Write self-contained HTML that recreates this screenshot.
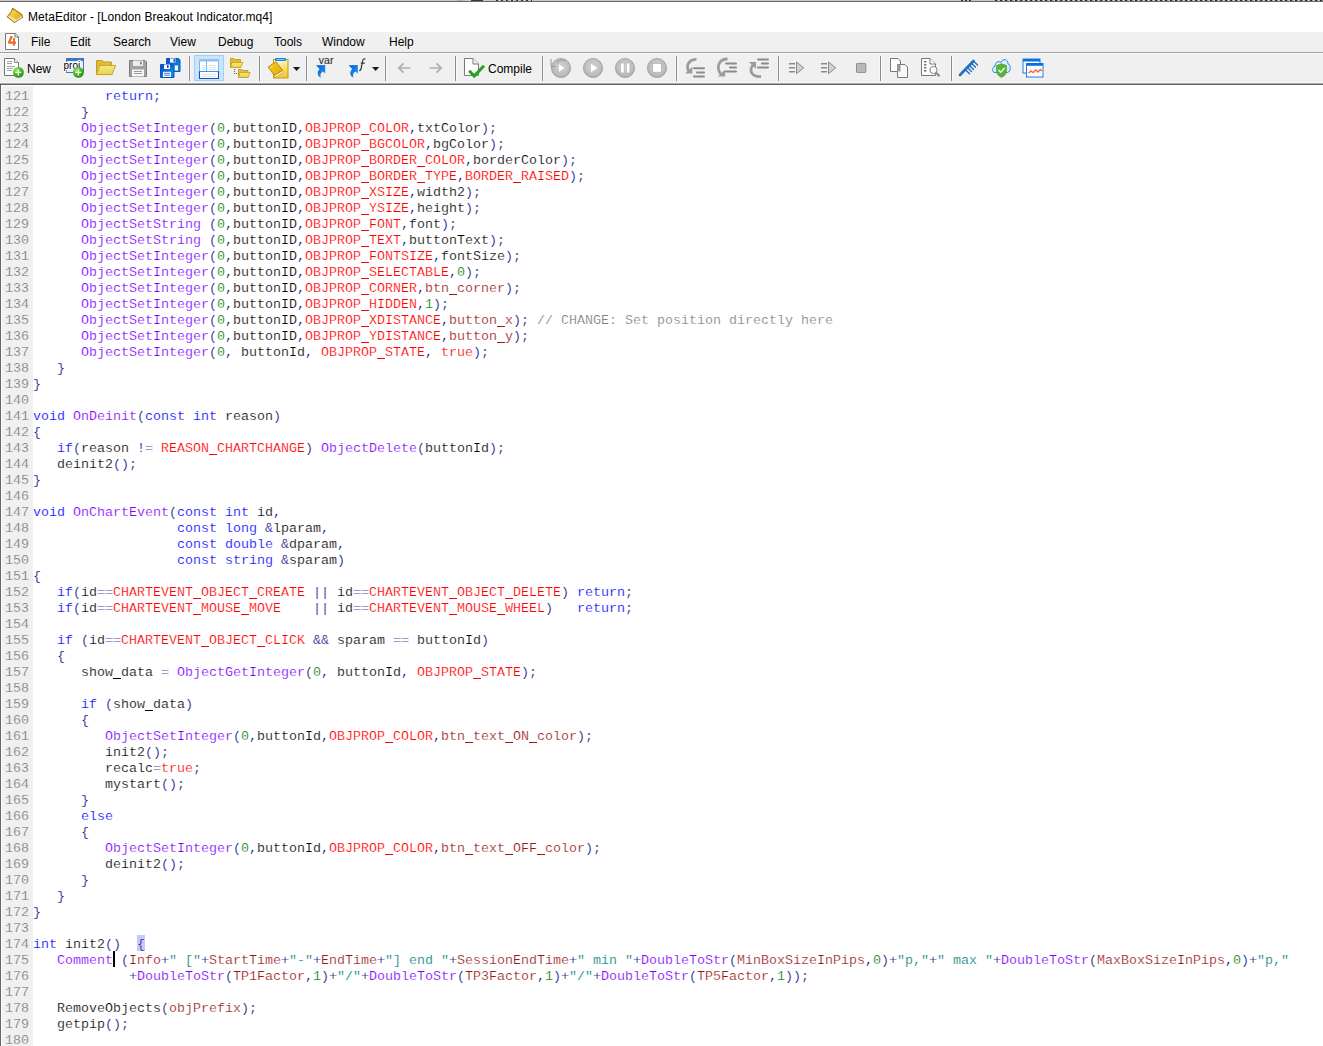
<!DOCTYPE html>
<html><head><meta charset="utf-8">
<style>
*{margin:0;padding:0;box-sizing:border-box}
html,body{width:1323px;height:1046px;overflow:hidden;background:#fff}
body{position:relative;font-family:"Liberation Sans",sans-serif}
#top{position:absolute;left:0;top:0;width:1323px;height:2px;background:#c8c8c8;border-bottom:1px solid #6a6a6a}
#title{position:absolute;left:0;top:2px;width:1323px;height:30px;background:#fff}
#title .t{position:absolute;left:28px;top:8px;font-size:12px;letter-spacing:0.05px;color:#000;white-space:nowrap}
#menu{position:absolute;left:0;top:32px;width:1323px;height:20px;background:#f0f0f0}
#menu span{position:absolute;top:3px;font-size:12px;color:#000}
#mline{position:absolute;left:0;top:52px;width:1323px;height:1px;background:#a0a0a0}
#mline2{position:absolute;left:0;top:53px;width:1323px;height:1px;background:#fafafa}
#tb{position:absolute;left:0;top:54px;width:1323px;height:28px;background:#f0f0f0}
#tbl1{position:absolute;left:0;top:82px;width:1323px;height:1px;background:#f8f8f8}
#tbl2{position:absolute;left:0;top:83px;width:1323px;height:1px;background:#a8a8a8}
#tbl3{position:absolute;left:0;top:84px;width:1323px;height:1px;background:#646464}
.sep{position:absolute;top:2px;width:1px;height:25px;background:#8c8c8c;box-shadow:1px 0 0 #fafafa,-1px 0 0 #f6f6f6}
.ico{position:absolute}
#tb .lbl{position:absolute;font-size:12px;color:#000;top:8px}
#ed{position:absolute;left:0;top:85px;width:1323px;height:961px;background:#fff}
#edl{position:absolute;left:0;top:85px;width:1px;height:961px;background:#646464}
#gut{position:absolute;left:2px;top:86px;width:31px;height:960px;background:#f0f0f0}
#code{position:absolute;left:0;top:89px;width:1323px}
.ln{height:16px;position:relative;white-space:pre;font-family:"Liberation Mono",monospace;font-size:13.333px;line-height:16px;-webkit-text-stroke:0.2px #fff}
.no{position:absolute;left:5px;top:0;color:#808080;-webkit-text-stroke:0.15px #f0f0f0}
.tx{position:absolute;left:33px;top:0;color:#000}
i{font-style:normal}
.u{display:inline-block;width:8px;height:16px;vertical-align:top;background:linear-gradient(currentColor,currentColor) 0 13px/8px 1px no-repeat}
.k{color:#0000ff}.f{color:#8000ff}.r{color:#ff0000}.v{color:#981818}.n{color:#008000}.p{color:#000080}.s{color:#008080}.c{color:#808080}
.hlb{background:#c8c8ff}
.caret{display:inline-block;position:absolute;width:2px;height:16px;background:#000;margin-left:0}
</style></head><body>
<div id="top"></div>
<div style="position:absolute;left:457px;top:0;width:14px;height:1px;background:linear-gradient(90deg,#a8a8a8,#d8d8d8)"></div>
<div style="position:absolute;left:471px;top:0;width:12px;height:1px;background:#3a3a3a"></div>
<div style="position:absolute;left:496px;top:0;width:36px;height:1px;background:repeating-linear-gradient(90deg,#333 0 2px,#c8c8c8 2px 5px)"></div>
<div style="position:absolute;left:961px;top:0;width:12px;height:1px;background:repeating-linear-gradient(90deg,#333 0 2px,#c8c8c8 2px 4px)"></div>
<div style="position:absolute;left:995px;top:0;width:328px;height:1px;background:repeating-linear-gradient(90deg,#2a2a2a 0 2px,#a0a0a0 2px 3px,#c8c8c8 3px 5px)"></div>

<div id="title"><div class="t">MetaEditor - [London Breakout Indicator.mq4]</div></div>
<div id="menu">
<span style="left:31px">File</span><span style="left:70px">Edit</span><span style="left:113px">Search</span><span style="left:170px">View</span><span style="left:218px">Debug</span><span style="left:274px">Tools</span><span style="left:322px">Window</span><span style="left:389px">Help</span>
</div>
<div id="mline"></div><div id="mline2"></div>
<div id="tb">
<span class="lbl" style="left:27px">New</span>
<span class="lbl" style="left:488px">Compile</span>
<div class="sep" style="left:189px"></div>
<div class="sep" style="left:259px"></div>
<div class="sep" style="left:306px"></div>
<div class="sep" style="left:385px"></div>
<div class="sep" style="left:455px"></div>
<div class="sep" style="left:542px"></div>
<div class="sep" style="left:676px"></div>
<div class="sep" style="left:778px"></div>
<div class="sep" style="left:880px"></div>
<div class="sep" style="left:951px"></div>
</div>
<div id="tbl1"></div><div id="tbl2"></div><div id="tbl3"></div>
<svg id="icons" width="1323" height="85" viewBox="0 0 1323 85" style="position:absolute;left:0;top:0">
<defs>
<linearGradient id="gold" x1="0" y1="0" x2="1" y2="1"><stop offset="0" stop-color="#fff2a0"/><stop offset="0.5" stop-color="#e9c02a"/><stop offset="1" stop-color="#d9a21c"/></linearGradient>
<radialGradient id="grn" cx="0.35" cy="0.3" r="0.75"><stop offset="0" stop-color="#9be85a"/><stop offset="0.6" stop-color="#3cb424"/><stop offset="1" stop-color="#2a8a14"/></radialGradient>
<linearGradient id="fold" x1="0" y1="0" x2="0" y2="1"><stop offset="0" stop-color="#f7ea80"/><stop offset="1" stop-color="#e8d050"/></linearGradient>
<linearGradient id="blu" x1="0" y1="0" x2="1" y2="1"><stop offset="0" stop-color="#0b4cc0"/><stop offset="1" stop-color="#0a9af0"/></linearGradient>
<radialGradient id="gc" cx="0.5" cy="0.45" r="0.55"><stop offset="0" stop-color="#d6d6d6"/><stop offset="0.75" stop-color="#bdbdbd"/><stop offset="1" stop-color="#a6a6a6"/></radialGradient>
<linearGradient id="arr" x1="0" y1="0" x2="1" y2="1"><stop offset="0" stop-color="#0a5ad0"/><stop offset="1" stop-color="#1aa0f8"/></linearGradient>
</defs>
<!-- title app icon -->
<path d="M12.6,8.3 L21.7,14.5 L22.7,17 L14.6,22.5 L7.3,16.9 L11.4,11.9 Z" fill="url(#gold)" stroke="#b07a1c" stroke-width="1.1" stroke-linejoin="round"/>
<path d="M7.9,16.5 L9,15.5 L16.6,19.4 L16.2,21.3 L14.6,22 Z" fill="#f3dfa0"/>
<path d="M16.6,19.4 L21.9,15.7 L22.3,16.9 L16.2,21.3 Z" fill="#ece2b8"/>
<!-- menu doc icon -->
<path d="M5.5,33.5 H15.5 L18.5,36.5 V49.5 H5.5 Z" fill="#fff" stroke="#7a7a7a" stroke-width="1"/>
<path d="M15,33.5 V37 H18.5" fill="#fff" stroke="#6a6a6a" stroke-width="1"/>
<path d="M10.4,36 H13 L10.6,41.5 H13 V38 H15 V41.5 H16 V43.8 H15 V45.8 H13 V43.8 H8.1 V41.8 Z" fill="#e8702c"/>
<!-- New doc -->
<path d="M4.5,58.5 H14.5 L18.5,62.5 V75.5 H4.5 Z" fill="#fff" stroke="#6e737a" stroke-width="1"/>
<path d="M14.5,58.5 V62.5 H18.5" fill="#fafafa" stroke="#80868c" stroke-width="1"/>
<g stroke="#a0a5aa" stroke-width="1"><path d="M7,61.5H12M7,63.5H12M7,66.5H15M7,68.5H13M7,70.5H12"/></g>
<circle cx="18.4" cy="72.4" r="5.4" fill="url(#grn)"/>
<path d="M15.4,72.4H21.4M18.4,69.4V75.4" stroke="#fff" stroke-width="1.3"/>
<!-- proj -->
<rect x="66.5" y="58.5" width="17" height="14" fill="#e4eef7" stroke="#3b78c6" stroke-width="1"/>
<rect x="66" y="58" width="18" height="3" fill="#3b78c6"/>
<text x="63.5" y="68.6" font-family="Liberation Sans" font-size="10" fill="#000" stroke="#fff" stroke-width="2" paint-order="stroke">proj</text>
<circle cx="78.4" cy="72.4" r="5.4" fill="url(#grn)"/>
<path d="M75.4,72.4H81.4M78.4,69.4V75.4" stroke="#fff" stroke-width="1.3"/>
<!-- open folder -->
<path d="M96.5,60.5 H102.5 L103.5,62 H111.5 V74.5 H96.5 Z" fill="#dcbc38" stroke="#c49c18" stroke-width="1"/>
<path d="M99.7,65.4 H115.6 L112,74.6 H96.4 Z" fill="url(#fold)" stroke="#c8a428" stroke-width="1" stroke-linejoin="round"/>
<!-- save gray -->
<path d="M129.5,60.5 H145 L146.5,62 V76.5 H129.5 Z" fill="#a2a2a2" stroke="#7c7c7c" stroke-width="1"/>
<rect x="133" y="60.5" width="10" height="5.5" fill="#ececec"/>
<rect x="140" y="61.8" width="1.6" height="2.6" fill="#7a7a7a"/>
<rect x="132" y="69.5" width="12" height="7" fill="#f8f8f8"/>
<path d="M134,71.5H142M134,73.5H142" stroke="#9a9a9a" stroke-width="1"/>
<!-- save all blue -->
<g>
<path d="M166.5,58.5 H178.5 L180,60 V71.5 H166.5 Z" fill="url(#blu)" stroke="#0c55c0" stroke-width="1"/>
<rect x="170" y="58.5" width="5.5" height="4" fill="#fff"/>
<rect x="173.5" y="59.3" width="1.6" height="2.4" fill="#0a30c0"/>
<rect x="174.5" y="65.5" width="3.5" height="5" fill="#fff"/>
</g>
<g>
<path d="M160.5,64.5 H172.5 L174,66 V77.5 H160.5 Z" fill="url(#blu)" stroke="#0c55c0" stroke-width="1"/>
<rect x="164" y="64.5" width="6" height="4.5" fill="#fff"/>
<rect x="167" y="65.2" width="1.6" height="2.6" fill="#0a30c0"/>
<rect x="163" y="71.8" width="8" height="5.2" fill="#fff"/>
<path d="M164,73.3H170M164,75.2H170" stroke="#2070e0" stroke-width="0.9"/>
</g>
<!-- pressed button -->
<rect x="194.5" y="55.5" width="29" height="25" fill="#cce4f7" stroke="#99d1ff" stroke-width="1"/>
<rect x="199.5" y="59.5" width="19" height="19" fill="#fff" stroke="#7fb5ea" stroke-width="1"/>
<rect x="199" y="59" width="20" height="2.5" fill="#8ec2f0"/>
<path d="M206.5,61V71" stroke="#6ab8f0" stroke-width="1"/>
<g stroke="#d4d8dc" stroke-width="0.8"><path d="M202,65.5H205M202,67.5H205M202,69.5H205M209,65.5H216M209,67.5H216M209,69.5H216M202,74.5H216M202,76.5H216"/></g>
<path d="M199.5,71.5H218.5V78.5H199.5Z" fill="none" stroke="#0f50c0" stroke-width="1.1"/>
<path d="M199.5,71.5H218.5" stroke="#1ea0f0" stroke-width="1"/>
<!-- folders tree -->
<path d="M230.5,58.5 H234 L235,59.5 H240.5 V67.5 H230.5 Z" fill="#dcbc38" stroke="#c49c18" stroke-width="0.9"/>
<path d="M232,62.5 H243 L240.5,67.5 H230.5 Z" fill="url(#fold)" stroke="#c8a428" stroke-width="0.9"/>
<g fill="#444"><circle cx="234.5" cy="69.5" r="0.6"/><circle cx="234.5" cy="71.5" r="0.6"/><circle cx="234.5" cy="73.5" r="0.6"/><circle cx="236.5" cy="73.5" r="0.6"/></g>
<path d="M238.5,69.5 H242 L243,70.5 H248 V77.5 H238.5 Z" fill="#dcbc38" stroke="#c49c18" stroke-width="0.9"/>
<path d="M240,72.5 H250 L248,77.5 H238.5 Z" fill="url(#fold)" stroke="#c8a428" stroke-width="0.9"/>
<!-- book/clipboard -->
<linearGradient id="clip" x1="0.2" y1="0" x2="0.6" y2="1"><stop offset="0" stop-color="#fffbe0"/><stop offset="0.6" stop-color="#f8e070"/><stop offset="1" stop-color="#f0cc30"/></linearGradient>
<linearGradient id="bk" x1="0" y1="0" x2="1" y2="1"><stop offset="0" stop-color="#f8d020"/><stop offset="1" stop-color="#e0a808"/></linearGradient>
<rect x="273.5" y="59.5" width="14.5" height="18.5" fill="url(#clip)" stroke="#c49a10" stroke-width="1"/>
<rect x="275" y="58" width="11" height="3" rx="0.8" fill="#1a88ea"/>
<path d="M276.5,59.5H284.5" stroke="#8ad0ff" stroke-width="0.8"/>
<path d="M268.2,67 L276,61.7 L282.5,70.2 L274.4,75.6 Z" fill="url(#bk)" stroke="#c08a08" stroke-width="1" stroke-linejoin="round"/>
<path d="M270,67.8 L272.4,66.2" stroke="#fff2a0" stroke-width="0.6"/>
<path d="M274.6,75.8 L282.6,70.5 L283.2,72.2 L275.4,77.6 Z" fill="#fff" stroke="#c08a08" stroke-width="0.7"/>
<!-- dropdown arrows -->
<path d="M293,67H300.2L296.6,71Z" fill="#1a1a1a"/>
<path d="M372,67H379.2L375.6,71Z" fill="#1a1a1a"/>
<!-- var -->
<text x="318.8" y="63.8" font-family="Liberation Sans" font-size="10.5" fill="#333" stroke="#333" stroke-width="0.15">var</text>
<path d="M316,65.3 L325.2,65 L325.2,73.6 L322.8,71.4 C320.5,73 320,75 320.8,77.8 C317.5,76 316.5,72.5 319.6,69 Z" fill="url(#arr)"/>
<!-- f -->
<path d="M348.6,65.3 L357.8,65 L357.8,73.6 L355.4,71.4 C353.1,73 352.6,75 353.4,77.8 C350.1,76 349.1,72.5 352.2,69 Z" fill="url(#arr)"/>
<path d="M365.5,59 C363.6,58.4 362.8,59.6 362.4,62 L361,69 C360.7,70.3 360,70.6 359.2,70.2 M360.8,63.2H364.8" fill="none" stroke="#383838" stroke-width="1.25"/>
<!-- back/forward -->
<g fill="none" stroke="#acacac" stroke-width="1.7" stroke-linecap="round" stroke-linejoin="round">
<path d="M398.8,68H409.6M403,63.8L398.8,68L403,72.2"/>
<path d="M430.4,68H441.2M437,63.8L441.2,68L437,72.2"/>
</g>
<!-- compile doc -->
<path d="M464.5,58.5 H473 L478.5,64 V75.5 H464.5 Z" fill="#fff" stroke="#7a7a7a" stroke-width="1"/>
<path d="M473,58.5V64H478.5" fill="#f4f4f4" stroke="#7a7a7a" stroke-width="1"/>
<path d="M469.2,70.8 L474.2,76 L484,65.8" fill="none" stroke="#26a01c" stroke-width="3" stroke-linejoin="miter"/>
<!-- circles -->
<g stroke="#a0a0a0" stroke-width="0.8" fill="url(#gc)">
<circle cx="561" cy="68" r="9.6"/><circle cx="593" cy="68" r="9.6"/><circle cx="625" cy="68" r="9.6"/><circle cx="657" cy="68" r="9.6"/>
</g>
<path d="M551,59 V66.5 H556 M556.5,63 C558.5,60 562,59.3 566,61" fill="none" stroke="#9a9a9a" stroke-width="1"/>
<path d="M558.5,63.5 L565,68 L558.5,72.5 Z" fill="#fff" stroke="#b0b0b0" stroke-width="0.5"/>
<path d="M590.5,63 L598,68 L590.5,73 Z" fill="#fff" stroke="#b0b0b0" stroke-width="0.5"/>
<rect x="620.5" y="63" width="3.6" height="10" fill="#fff" stroke="#a0a0a0" stroke-width="0.5"/>
<rect x="626.3" y="63" width="3.6" height="10" fill="#fff" stroke="#a0a0a0" stroke-width="0.5"/>
<rect x="652.8" y="63.5" width="8.4" height="8.6" fill="#fff" stroke="#a0a0a0" stroke-width="0.5"/>
<!-- step icons -->
<g fill="none" stroke="#9c9c9c" stroke-width="2.8">
<path d="M696.5,59.5 C690,59 685.5,64.5 688.5,71"/>
<path d="M727.5,59 C719,59 715.5,67 721,74.5"/>
<path d="M753,65 C748.5,71 752,77 761,76.5"/>
</g>
<g fill="#9c9c9c">
<path d="M685,73.6 H692.3 V66.8 Z"/>
<path d="M718,76.5 H725.2 V69.6 Z"/>
<path d="M748.8,62 H756 V69 Z"/>
</g>
<g stroke="#8a8a8a" stroke-width="2" stroke-linecap="round" fill="none">
<path d="M694,68.3H704M697,72.5H704M694,76.5H704"/>
<path d="M726,63.5H736M730,67.5H736M726,71.5H736"/>
<path d="M758,59.5H768M762,63.5H768M758,67.5H768"/>
</g>
<!-- run icons -->
<g stroke="#8a8a8a" stroke-width="1.5" stroke-linecap="round"><path d="M789.5,63.8H794.5M789.5,67.8H794.5M789.5,71.8H794.5M821.5,63.8H826.5M821.5,67.8H826.5M821.5,71.8H826.5"/></g>
<path d="M796.5,62 L803.8,67.8 L796.5,73.7 Z" fill="#d0d0d0" stroke="#8e8e8e" stroke-width="1"/>
<path d="M828.5,62 L835.8,67.8 L828.5,73.7 Z" fill="#d0d0d0" stroke="#8e8e8e" stroke-width="1"/>
<rect x="856.5" y="63.4" width="9.3" height="9" fill="#b8b8b8" stroke="#8c8c8c" stroke-width="1" rx="0.6"/>
<!-- copy docs -->
<path d="M890.5,58.5 H898 L900.5,61 V71.5 H890.5 Z" fill="#fff" stroke="#777" stroke-width="1"/>
<path d="M897.5,64.5 H905 L907.5,67 V77.5 H897.5 Z" fill="#fafafa" stroke="#777" stroke-width="1"/>
<rect x="897" y="64.5" width="3.5" height="7" fill="#9a9a9a"/>
<!-- search doc -->
<path d="M921.5,58.5 H930 L935.5,64 V75.5 H921.5 Z" fill="#fff" stroke="#777" stroke-width="1"/>
<path d="M930,58.5V64H935.5" fill="#fff" stroke="#777" stroke-width="1"/>
<g fill="#777"><rect x="924" y="61" width="2.4" height="1.6"/><rect x="924" y="64" width="2.4" height="1.6"/><rect x="924" y="67" width="2.4" height="1.6"/><rect x="924" y="70" width="2.4" height="1.6"/></g>
<circle cx="933.5" cy="70" r="3.6" fill="#fff" stroke="#808080" stroke-width="1"/>
<path d="M936.2,72.7 L939.5,76.3" stroke="#8a8a8a" stroke-width="2"/>
<!-- comb -->
<path d="M960,75 L973.5,61" stroke="#1f6fc4" stroke-width="2.6" stroke-linecap="round"/>
<g stroke="#1f6fc4" stroke-width="1.4" stroke-linecap="round"><path d="M973.5,61L977.5,65M971.5,63.2L975.5,67.2M969.5,65.4L973.5,69.4M967.5,67.6L971.5,71.6M965.5,69.8L969.5,73.8"/></g>
<!-- cloud shield -->
<path d="M995,72.5 C991.5,72.5 991.5,67 995,66.5 C994.5,62 999,60.5 1001,62.5 C1002.5,58 1008.5,59 1008,64 C1011,64.5 1011,72 1007.5,72.5 Z" fill="#d8ecfa" stroke="#2a8ae0" stroke-width="1"/>
<path d="M996.5,65.5 L1001.5,63.8 L1006.5,65.5 V71 C1006.5,74.5 1003.5,76.5 1001.5,77.3 C999.5,76.5 996.5,74.5 996.5,71 Z" fill="#58b43a" stroke="#3e9a24" stroke-width="0.6"/>
<path d="M998.5,70 L1000.8,72.3 L1004.5,68" fill="none" stroke="#fff" stroke-width="1.3"/>
<!-- chart windows -->
<rect x="1023" y="59" width="17" height="14" fill="#fff" stroke="#1a7ae8" stroke-width="1"/>
<rect x="1023" y="59" width="17" height="2.5" fill="#0a70e0"/>
<rect x="1026.5" y="63.5" width="16.5" height="13.5" fill="#fff" stroke="#1a7ae8" stroke-width="1"/>
<rect x="1026.5" y="63" width="16.5" height="2.8" fill="#0a70e0"/>
<g stroke="#e0e0e0" stroke-width="0.6"><path d="M1030.5,66V76.5M1034.5,66V76.5M1038.5,66V76.5M1027,69.5H1043M1027,72.5H1043"/></g>
<path d="M1028.5,73 L1031,71 L1033,72.5 L1036,70 L1038,72 L1040.5,69.5 L1042,71" fill="none" stroke="#f06020" stroke-width="1.2"/>
</svg>

<div id="ed"></div><div id="edl"></div><div id="gut"></div>
<div style="position:absolute;left:137px;top:935px;width:8px;height:16px;background:#c8c8ff"></div>
<div id="code">
<div class="ln"><span class="no">121</span><span class="tx">         <i class="k">return</i><i class="p">;</i></span></div>
<div class="ln"><span class="no">122</span><span class="tx">      <i class="p">}</i></span></div>
<div class="ln"><span class="no">123</span><span class="tx">      <i class="f">ObjectSetInteger</i><i class="p">(</i><i class="n">0</i><i class="p">,</i>buttonID<i class="p">,</i><i class="r">OBJPROP<b class="u"></b>COLOR</i><i class="p">,</i>txtColor<i class="p">)</i><i class="p">;</i></span></div>
<div class="ln"><span class="no">124</span><span class="tx">      <i class="f">ObjectSetInteger</i><i class="p">(</i><i class="n">0</i><i class="p">,</i>buttonID<i class="p">,</i><i class="r">OBJPROP<b class="u"></b>BGCOLOR</i><i class="p">,</i>bgColor<i class="p">)</i><i class="p">;</i></span></div>
<div class="ln"><span class="no">125</span><span class="tx">      <i class="f">ObjectSetInteger</i><i class="p">(</i><i class="n">0</i><i class="p">,</i>buttonID<i class="p">,</i><i class="r">OBJPROP<b class="u"></b>BORDER<b class="u"></b>COLOR</i><i class="p">,</i>borderColor<i class="p">)</i><i class="p">;</i></span></div>
<div class="ln"><span class="no">126</span><span class="tx">      <i class="f">ObjectSetInteger</i><i class="p">(</i><i class="n">0</i><i class="p">,</i>buttonID<i class="p">,</i><i class="r">OBJPROP<b class="u"></b>BORDER<b class="u"></b>TYPE</i><i class="p">,</i><i class="r">BORDER<b class="u"></b>RAISED</i><i class="p">)</i><i class="p">;</i></span></div>
<div class="ln"><span class="no">127</span><span class="tx">      <i class="f">ObjectSetInteger</i><i class="p">(</i><i class="n">0</i><i class="p">,</i>buttonID<i class="p">,</i><i class="r">OBJPROP<b class="u"></b>XSIZE</i><i class="p">,</i>width2<i class="p">)</i><i class="p">;</i></span></div>
<div class="ln"><span class="no">128</span><span class="tx">      <i class="f">ObjectSetInteger</i><i class="p">(</i><i class="n">0</i><i class="p">,</i>buttonID<i class="p">,</i><i class="r">OBJPROP<b class="u"></b>YSIZE</i><i class="p">,</i>height<i class="p">)</i><i class="p">;</i></span></div>
<div class="ln"><span class="no">129</span><span class="tx">      <i class="f">ObjectSetString</i> <i class="p">(</i><i class="n">0</i><i class="p">,</i>buttonID<i class="p">,</i><i class="r">OBJPROP<b class="u"></b>FONT</i><i class="p">,</i>font<i class="p">)</i><i class="p">;</i></span></div>
<div class="ln"><span class="no">130</span><span class="tx">      <i class="f">ObjectSetString</i> <i class="p">(</i><i class="n">0</i><i class="p">,</i>buttonID<i class="p">,</i><i class="r">OBJPROP<b class="u"></b>TEXT</i><i class="p">,</i>buttonText<i class="p">)</i><i class="p">;</i></span></div>
<div class="ln"><span class="no">131</span><span class="tx">      <i class="f">ObjectSetInteger</i><i class="p">(</i><i class="n">0</i><i class="p">,</i>buttonID<i class="p">,</i><i class="r">OBJPROP<b class="u"></b>FONTSIZE</i><i class="p">,</i>fontSize<i class="p">)</i><i class="p">;</i></span></div>
<div class="ln"><span class="no">132</span><span class="tx">      <i class="f">ObjectSetInteger</i><i class="p">(</i><i class="n">0</i><i class="p">,</i>buttonID<i class="p">,</i><i class="r">OBJPROP<b class="u"></b>SELECTABLE</i><i class="p">,</i><i class="n">0</i><i class="p">)</i><i class="p">;</i></span></div>
<div class="ln"><span class="no">133</span><span class="tx">      <i class="f">ObjectSetInteger</i><i class="p">(</i><i class="n">0</i><i class="p">,</i>buttonID<i class="p">,</i><i class="r">OBJPROP<b class="u"></b>CORNER</i><i class="p">,</i><i class="v">btn<b class="u"></b>corner</i><i class="p">)</i><i class="p">;</i></span></div>
<div class="ln"><span class="no">134</span><span class="tx">      <i class="f">ObjectSetInteger</i><i class="p">(</i><i class="n">0</i><i class="p">,</i>buttonID<i class="p">,</i><i class="r">OBJPROP<b class="u"></b>HIDDEN</i><i class="p">,</i><i class="n">1</i><i class="p">)</i><i class="p">;</i></span></div>
<div class="ln"><span class="no">135</span><span class="tx">      <i class="f">ObjectSetInteger</i><i class="p">(</i><i class="n">0</i><i class="p">,</i>buttonID<i class="p">,</i><i class="r">OBJPROP<b class="u"></b>XDISTANCE</i><i class="p">,</i><i class="v">button<b class="u"></b>x</i><i class="p">)</i><i class="p">;</i> <i class="c">// CHANGE: Set position directly here</i></span></div>
<div class="ln"><span class="no">136</span><span class="tx">      <i class="f">ObjectSetInteger</i><i class="p">(</i><i class="n">0</i><i class="p">,</i>buttonID<i class="p">,</i><i class="r">OBJPROP<b class="u"></b>YDISTANCE</i><i class="p">,</i><i class="v">button<b class="u"></b>y</i><i class="p">)</i><i class="p">;</i></span></div>
<div class="ln"><span class="no">137</span><span class="tx">      <i class="f">ObjectSetInteger</i><i class="p">(</i><i class="n">0</i><i class="p">,</i> buttonId<i class="p">,</i> <i class="r">OBJPROP<b class="u"></b>STATE</i><i class="p">,</i> <i class="r">true</i><i class="p">)</i><i class="p">;</i></span></div>
<div class="ln"><span class="no">138</span><span class="tx">   <i class="p">}</i></span></div>
<div class="ln"><span class="no">139</span><span class="tx"><i class="p">}</i></span></div>
<div class="ln"><span class="no">140</span><span class="tx"></span></div>
<div class="ln"><span class="no">141</span><span class="tx"><i class="k">void</i> <i class="f">OnDeinit</i><i class="p">(</i><i class="k">const</i> <i class="k">int</i> reason<i class="p">)</i></span></div>
<div class="ln"><span class="no">142</span><span class="tx"><i class="p">{</i></span></div>
<div class="ln"><span class="no">143</span><span class="tx">   <i class="k">if</i><i class="p">(</i>reason <i class="p">!</i><i class="p">=</i> <i class="r">REASON<b class="u"></b>CHARTCHANGE</i><i class="p">)</i> <i class="f">ObjectDelete</i><i class="p">(</i>buttonId<i class="p">)</i><i class="p">;</i></span></div>
<div class="ln"><span class="no">144</span><span class="tx">   deinit2<i class="p">(</i><i class="p">)</i><i class="p">;</i></span></div>
<div class="ln"><span class="no">145</span><span class="tx"><i class="p">}</i></span></div>
<div class="ln"><span class="no">146</span><span class="tx"></span></div>
<div class="ln"><span class="no">147</span><span class="tx"><i class="k">void</i> <i class="f">OnChartEvent</i><i class="p">(</i><i class="k">const</i> <i class="k">int</i> id<i class="p">,</i></span></div>
<div class="ln"><span class="no">148</span><span class="tx">                  <i class="k">const</i> <i class="k">long</i> <i class="p">&amp;</i>lparam<i class="p">,</i></span></div>
<div class="ln"><span class="no">149</span><span class="tx">                  <i class="k">const</i> <i class="k">double</i> <i class="p">&amp;</i>dparam<i class="p">,</i></span></div>
<div class="ln"><span class="no">150</span><span class="tx">                  <i class="k">const</i> <i class="k">string</i> <i class="p">&amp;</i>sparam<i class="p">)</i></span></div>
<div class="ln"><span class="no">151</span><span class="tx"><i class="p">{</i></span></div>
<div class="ln"><span class="no">152</span><span class="tx">   <i class="k">if</i><i class="p">(</i>id<i class="p">=</i><i class="p">=</i><i class="r">CHARTEVENT<b class="u"></b>OBJECT<b class="u"></b>CREATE</i> <i class="p">|</i><i class="p">|</i> id<i class="p">=</i><i class="p">=</i><i class="r">CHARTEVENT<b class="u"></b>OBJECT<b class="u"></b>DELETE</i><i class="p">)</i> <i class="k">return</i><i class="p">;</i></span></div>
<div class="ln"><span class="no">153</span><span class="tx">   <i class="k">if</i><i class="p">(</i>id<i class="p">=</i><i class="p">=</i><i class="r">CHARTEVENT<b class="u"></b>MOUSE<b class="u"></b>MOVE</i>    <i class="p">|</i><i class="p">|</i> id<i class="p">=</i><i class="p">=</i><i class="r">CHARTEVENT<b class="u"></b>MOUSE<b class="u"></b>WHEEL</i><i class="p">)</i>   <i class="k">return</i><i class="p">;</i></span></div>
<div class="ln"><span class="no">154</span><span class="tx"></span></div>
<div class="ln"><span class="no">155</span><span class="tx">   <i class="k">if</i> <i class="p">(</i>id<i class="p">=</i><i class="p">=</i><i class="r">CHARTEVENT<b class="u"></b>OBJECT<b class="u"></b>CLICK</i> <i class="p">&amp;</i><i class="p">&amp;</i> sparam <i class="p">=</i><i class="p">=</i> buttonId<i class="p">)</i></span></div>
<div class="ln"><span class="no">156</span><span class="tx">   <i class="p">{</i></span></div>
<div class="ln"><span class="no">157</span><span class="tx">      show<b class="u"></b>data <i class="p">=</i> <i class="f">ObjectGetInteger</i><i class="p">(</i><i class="n">0</i><i class="p">,</i> buttonId<i class="p">,</i> <i class="r">OBJPROP<b class="u"></b>STATE</i><i class="p">)</i><i class="p">;</i></span></div>
<div class="ln"><span class="no">158</span><span class="tx"></span></div>
<div class="ln"><span class="no">159</span><span class="tx">      <i class="k">if</i> <i class="p">(</i>show<b class="u"></b>data<i class="p">)</i></span></div>
<div class="ln"><span class="no">160</span><span class="tx">      <i class="p">{</i></span></div>
<div class="ln"><span class="no">161</span><span class="tx">         <i class="f">ObjectSetInteger</i><i class="p">(</i><i class="n">0</i><i class="p">,</i>buttonId<i class="p">,</i><i class="r">OBJPROP<b class="u"></b>COLOR</i><i class="p">,</i><i class="v">btn<b class="u"></b>text<b class="u"></b>ON<b class="u"></b>color</i><i class="p">)</i><i class="p">;</i></span></div>
<div class="ln"><span class="no">162</span><span class="tx">         init2<i class="p">(</i><i class="p">)</i><i class="p">;</i></span></div>
<div class="ln"><span class="no">163</span><span class="tx">         recalc<i class="p">=</i><i class="r">true</i><i class="p">;</i></span></div>
<div class="ln"><span class="no">164</span><span class="tx">         mystart<i class="p">(</i><i class="p">)</i><i class="p">;</i></span></div>
<div class="ln"><span class="no">165</span><span class="tx">      <i class="p">}</i></span></div>
<div class="ln"><span class="no">166</span><span class="tx">      <i class="k">else</i></span></div>
<div class="ln"><span class="no">167</span><span class="tx">      <i class="p">{</i></span></div>
<div class="ln"><span class="no">168</span><span class="tx">         <i class="f">ObjectSetInteger</i><i class="p">(</i><i class="n">0</i><i class="p">,</i>buttonId<i class="p">,</i><i class="r">OBJPROP<b class="u"></b>COLOR</i><i class="p">,</i><i class="v">btn<b class="u"></b>text<b class="u"></b>OFF<b class="u"></b>color</i><i class="p">)</i><i class="p">;</i></span></div>
<div class="ln"><span class="no">169</span><span class="tx">         deinit2<i class="p">(</i><i class="p">)</i><i class="p">;</i></span></div>
<div class="ln"><span class="no">170</span><span class="tx">      <i class="p">}</i></span></div>
<div class="ln"><span class="no">171</span><span class="tx">   <i class="p">}</i></span></div>
<div class="ln"><span class="no">172</span><span class="tx"><i class="p">}</i></span></div>
<div class="ln"><span class="no">173</span><span class="tx"></span></div>
<div class="ln"><span class="no">174</span><span class="tx"><i class="k">int</i> init2<i class="p">(</i><i class="p">)</i>  <i class="p">{</i></span></div>
<div class="ln"><span class="no">175</span><span class="tx">   <i class="f">Comment</i> <i class="p">(</i><i class="v">Info</i><i class="p">+</i><i class="s">&quot; [&quot;</i><i class="p">+</i><i class="v">StartTime</i><i class="p">+</i><i class="s">&quot;-&quot;</i><i class="p">+</i><i class="v">EndTime</i><i class="p">+</i><i class="s">&quot;] end &quot;</i><i class="p">+</i><i class="v">SessionEndTime</i><i class="p">+</i><i class="s">&quot; min &quot;</i><i class="p">+</i><i class="f">DoubleToStr</i><i class="p">(</i><i class="v">MinBoxSizeInPips</i><i class="p">,</i><i class="n">0</i><i class="p">)</i><i class="p">+</i><i class="s">&quot;p,&quot;</i><i class="p">+</i><i class="s">&quot; max &quot;</i><i class="p">+</i><i class="f">DoubleToStr</i><i class="p">(</i><i class="v">MaxBoxSizeInPips</i><i class="p">,</i><i class="n">0</i><i class="p">)</i><i class="p">+</i><i class="s">&quot;p,&quot;</i></span></div>
<div class="ln"><span class="no">176</span><span class="tx">            <i class="p">+</i><i class="f">DoubleToStr</i><i class="p">(</i><i class="v">TP1Factor</i><i class="p">,</i><i class="n">1</i><i class="p">)</i><i class="p">+</i><i class="s">&quot;/&quot;</i><i class="p">+</i><i class="f">DoubleToStr</i><i class="p">(</i><i class="v">TP3Factor</i><i class="p">,</i><i class="n">1</i><i class="p">)</i><i class="p">+</i><i class="s">&quot;/&quot;</i><i class="p">+</i><i class="f">DoubleToStr</i><i class="p">(</i><i class="v">TP5Factor</i><i class="p">,</i><i class="n">1</i><i class="p">)</i><i class="p">)</i><i class="p">;</i></span></div>
<div class="ln"><span class="no">177</span><span class="tx"></span></div>
<div class="ln"><span class="no">178</span><span class="tx">   RemoveObjects<i class="p">(</i><i class="v">objPrefix</i><i class="p">)</i><i class="p">;</i></span></div>
<div class="ln"><span class="no">179</span><span class="tx">   getpip<i class="p">(</i><i class="p">)</i><i class="p">;</i></span></div>
<div class="ln"><span class="no">180</span><span class="tx"></span></div>
</div>
<div style="position:absolute;left:113px;top:951px;width:2px;height:16px;background:#000"></div>
</body></html>
